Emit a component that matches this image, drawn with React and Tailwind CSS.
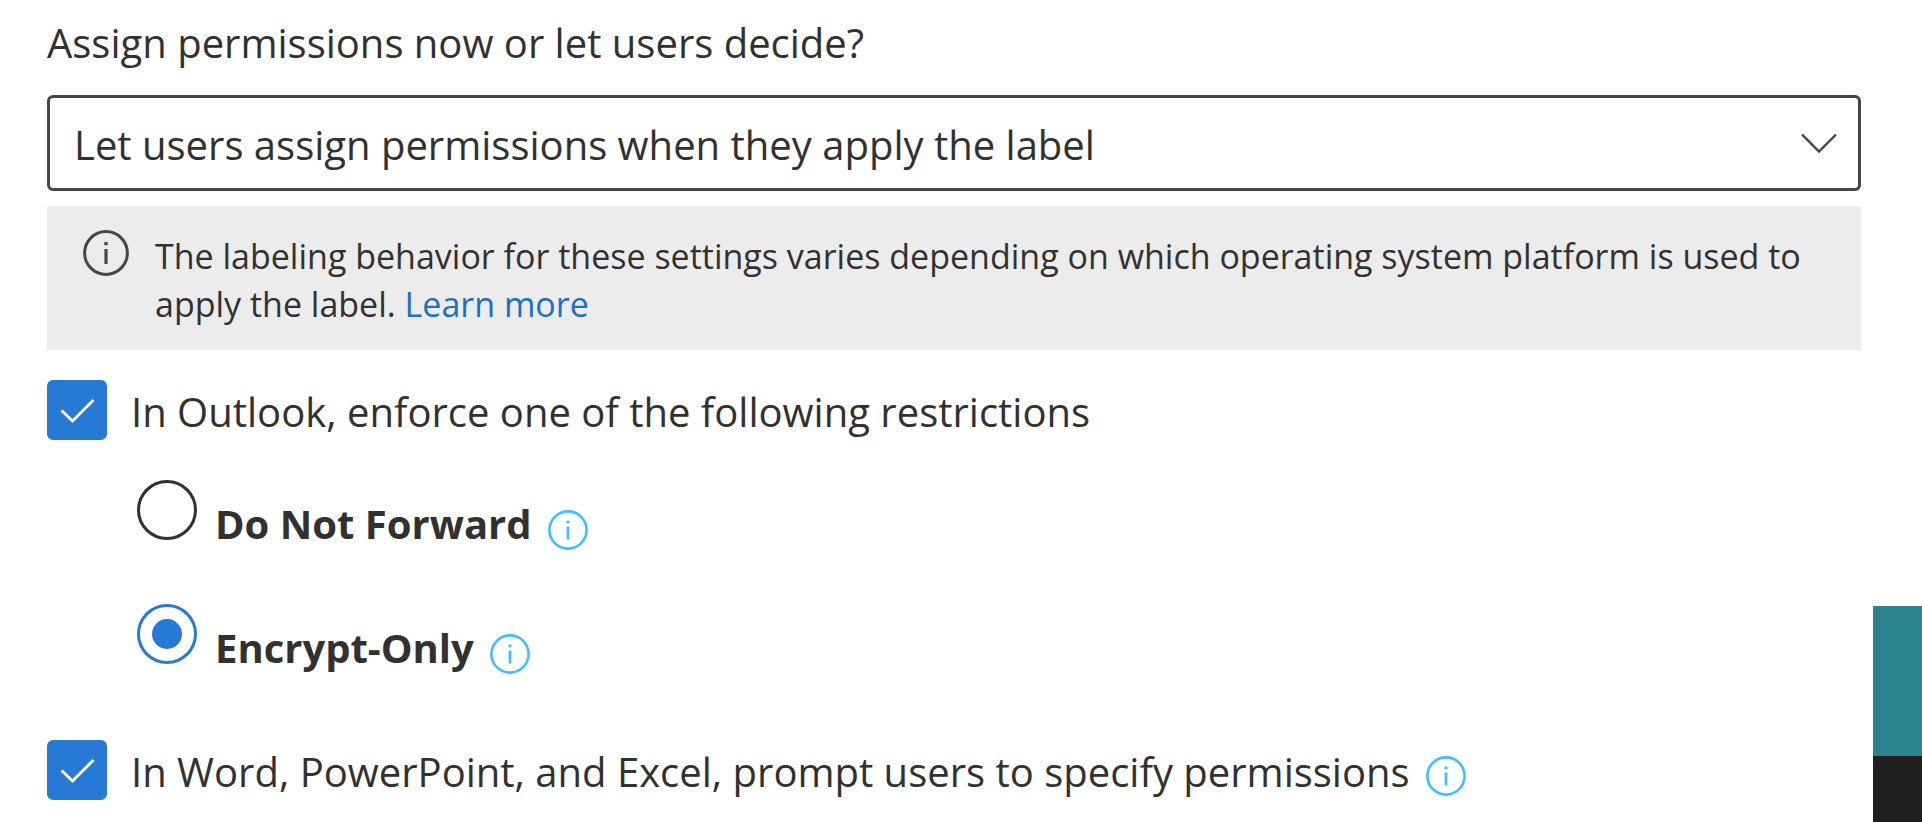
import React, { useState } from "react";

function InfoIcon({ className }) {
  return (
    <svg viewBox="0 0 40 40" fill="none" className={className} aria-hidden="true">
      <circle cx="20" cy="20" r="18.6" stroke="currentColor" strokeWidth="2.6" />
      <path d="M20 16.5v13" stroke="currentColor" strokeWidth="2.8" />
      <path d="M20 10.5v2.8" stroke="currentColor" strokeWidth="3" />
    </svg>
  );
}

function Checkbox({ id, label, checked, onChange, info }) {
  return (
    <div className="flex items-start">
      <span className="grid shrink-0">
        <input
          id={id}
          type="checkbox"
          checked={checked}
          onChange={(e) => onChange(e.target.checked)}
          className="col-start-1 row-start-1 size-[60px] appearance-none rounded-md border-3 border-[#323130] checked:border-[#2779d6] checked:bg-[#2779d6]"
        />
        {checked && (
          <svg viewBox="0 0 60 60" fill="none" className="pointer-events-none col-start-1 row-start-1 size-[60px]" aria-hidden="true">
            <path d="M14.5 30.5 25.5 41 46.5 20" stroke="#fff" strokeWidth="3" />
          </svg>
        )}
      </span>
      <label htmlFor={id} className="pt-0.5 pl-6 leading-[60px]">{label}</label>
      {info && (
        <button type="button" aria-label="More information" className="mt-4 ml-4 text-[#40bfff]">
          <InfoIcon className="size-10" />
        </button>
      )}
    </div>
  );
}

function Radio({ id, label, checked, onChange }) {
  return (
    <div className="flex items-start">
      <span className="grid shrink-0 place-items-center">
        <input
          id={id}
          type="radio"
          name="restriction"
          checked={checked}
          onChange={onChange}
          className="col-start-1 row-start-1 size-[60px] appearance-none rounded-full border-3 border-[#323130] checked:border-[#2779d6]"
        />
        {checked && <span className="pointer-events-none col-start-1 row-start-1 size-[30px] rounded-full bg-[#2779d6]" />}
      </span>
      <label htmlFor={id} className="pt-3.5 pl-[18px] font-bold leading-[60px]">{label}</label>
      <button type="button" aria-label="More information" className="mt-[30px] ml-4 text-[#40bfff]">
        <InfoIcon className="size-10" />
      </button>
    </div>
  );
}

export default function App() {
  const [outlook, setOutlook] = useState(true);
  const [office, setOffice] = useState(true);
  const [restriction, setRestriction] = useState("encrypt");

  return (
    <div className="flex min-h-screen bg-white font-['Open_Sans',sans-serif] text-[40px] text-[#323130]">
      <main className="min-w-0 flex-1 pt-[15px] pr-3 pb-4 pl-[47px]">
        <label htmlFor="assign" className="block leading-[56px]">
          Assign permissions now or let users decide?
        </label>

        <div className="mt-6 grid items-center">
          <select
            id="assign"
            className="col-start-1 row-start-1 h-24 w-full appearance-none rounded-md border-3 border-[#484644] bg-white px-6 pt-1"
          >
            <option>Let users assign permissions when they apply the label</option>
            <option>Assign permissions now</option>
          </select>
          <svg viewBox="0 0 36 20" fill="none" className="pointer-events-none col-start-1 row-start-1 mr-6 h-5 w-9 justify-self-end" aria-hidden="true">
            <path d="M1 1.5 18 18.5 35 1.5" stroke="#484644" strokeWidth="2.4" />
          </svg>
        </div>

        <div className="mt-[15px] flex items-start bg-[#ececec] pt-6 pr-8 pb-[22px] pl-9">
          <InfoIcon className="size-[46px] shrink-0 text-[#484644]" />
          <p className="pt-0.5 pl-[26px] text-[34px] leading-[48px]">
            The labeling behavior for these settings varies depending on which operating system platform is used to apply the label.{" "}
            <a href="#" className="text-[#1a6fc9]">Learn more</a>
          </p>
        </div>

        <div className="mt-[30px]">
          <Checkbox id="outlook" label="In Outlook, enforce one of the following restrictions" checked={outlook} onChange={setOutlook} />
        </div>

        <div role="radiogroup" aria-label="Outlook restriction" className="mt-[38px] flex flex-col gap-[50px] pl-[90px]">
          <Radio id="forward" label="Do Not Forward" checked={restriction === "forward"} onChange={() => setRestriction("forward")} />
          <Radio id="encrypt" label="Encrypt-Only" checked={restriction === "encrypt"} onChange={() => setRestriction("encrypt")} />
        </div>

        <div className="mt-[62px]">
          <Checkbox
            id="office"
            label="In Word, PowerPoint, and Excel, prompt users to specify permissions"
            checked={office}
            onChange={setOffice}
            info
          />
        </div>
      </main>

      <aside className="flex w-[49px] shrink-0 flex-col justify-end">
        <div className="h-[150px] bg-[#2b848b]" />
        <div className="h-[66px] bg-[#201f1e]" />
      </aside>
    </div>
  );
}
